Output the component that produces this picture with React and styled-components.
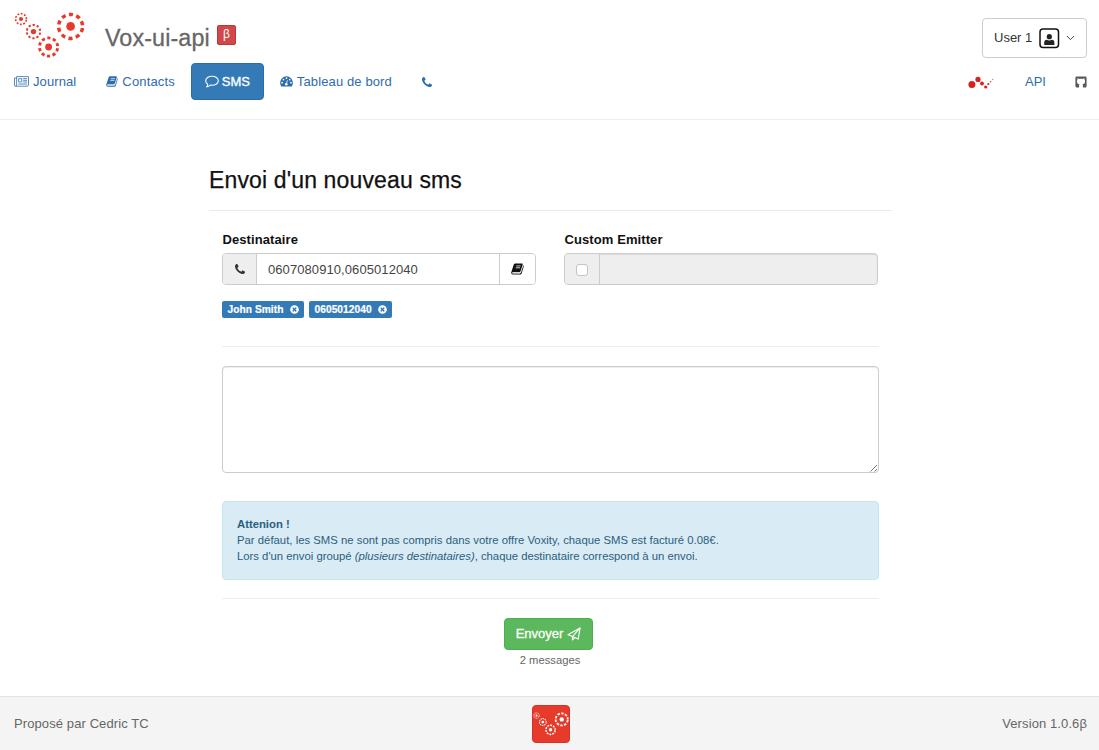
import React from "react";
import styled, { createGlobalStyle, css } from "styled-components";
import { FaTimesCircle } from "react-icons/fa";

const Global = createGlobalStyle`
  *, *::before, *::after { box-sizing: border-box; }
  body {
    margin: 0;
    background: #fff;
    color: #111;
    font-family: "Liberation Sans", Arial, Helvetica, sans-serif;
    font-size: 13px;
    line-height: 18px;
  }
`;

const Page = styled.div`
  display: flex;
  flex-direction: column;
  height: 750px;
  overflow: hidden;
`;

const Header = styled.header`
  height: 120px;
  flex: none;
  border-bottom: 1px solid #eee;
`;

const TopBar = styled.div`
  display: flex;
  justify-content: space-between;
  height: 63px;
  padding: 0 12px 0 14px;
`;

const Brand = styled.div`
  display: flex;
  align-items: flex-start;
  padding-top: 12px;
`;

const BrandName = styled.span`
  margin: 12px 6px 0 20px;
  width: 106px;
  font-size: 23.3px;
  line-height: 28px;
  letter-spacing: 0.12px;
  color: #666;
  -webkit-text-stroke: 0.3px #666;
  white-space: nowrap;
`;

const Beta = styled.span`
  width: 19px;
  height: 20px;
  margin-top: 13px;
  border: 1px solid #b5383a;
  border-radius: 2px;
  background: #d2484a;
  color: #fff;
  font-size: 12px;
  line-height: 17px;
  text-align: center;
`;

const UserButton = styled.button`
  display: flex;
  align-items: center;
  width: 105px;
  height: 40px;
  margin-top: 18px;
  padding: 0 0 0 11px;
  border: 1px solid #ccc;
  border-radius: 4px;
  background: #fff;
  color: #333;
  font: inherit;
  white-space: nowrap;
`;

const UserName = styled.span`
  width: 45px;
  text-align: left;
`;

const Nav = styled.nav`
  display: flex;
  height: 37px;
  color: #2f6cab;
`;

const NavItem = styled.a`
  display: flex;
  align-items: center;
  height: 37px;
  margin-left: ${(p) => p.$gap || 0}px;
  gap: ${(p) => p.$space ?? 4}px;
  color: #2e6dab;
  letter-spacing: ${(p) => p.$track || 0}px;
  white-space: nowrap;
  svg { flex: none; }
  ${(p) =>
    p.$active &&
    css`
      width: 73px;
      padding-left: 13px;
      gap: 3px;
      border: 1px solid #2e6da4;
      border-radius: 4px;
      background: #337ab7;
      color: #fff;
      -webkit-text-stroke: 0.35px #fff;
    `}
`;

const Spacer = styled.div`
  flex: 1;
`;

const Main = styled.main`
  flex: 1;
  width: 683px;
  margin-left: 209px;
  padding-top: 45px;
`;

const Title = styled.h1`
  margin: 0;
  height: 46px;
  border-bottom: 1px solid #eaeaea;
  font-size: 23px;
  font-weight: 400;
  line-height: 30px;
  letter-spacing: 0.14px;
  color: #111;
  -webkit-text-stroke: 0.25px #111;
`;

const Form = styled.form`
  display: flex;
  flex-direction: column;
  margin: 0 13px;
`;

const Fields = styled.div`
  display: flex;
  gap: 28px;
  height: 136px;
  padding-top: 19px;
  border-bottom: 1px solid #eee;
`;

const Field = styled.div`
  width: 314px;
`;

const Label = styled.label`
  display: block;
  height: 23px;
  padding-left: 0.5px;
  font-weight: 700;
  line-height: 19px;
  letter-spacing: 0.09px;
  white-space: nowrap;
`;

const InputGroup = styled.div`
  display: flex;
  height: 32px;
  border: 1px solid #ccc;
  border-radius: 4px;
  overflow: hidden;
  background: ${(p) => (p.$disabled ? "#eee" : "#fff")};
  box-shadow: ${(p) => (p.$disabled ? "inset 0 1px 1px rgba(0,0,0,.08)" : "none")};
`;

const Addon = styled.span`
  display: flex;
  align-items: center;
  justify-content: center;
  width: ${(p) => p.$width || 34}px;
  border-right: 1px solid #ccc;
  background: #eee;
  color: #333;
`;

const NumberInput = styled.input`
  flex: 1;
  min-width: 0;
  padding: 2px 11px 0;
  border: 0;
  outline: 0;
  background: transparent;
  color: #444;
  font: inherit;
  letter-spacing: 0.08px;
`;

const BookButton = styled.button`
  display: flex;
  align-items: center;
  justify-content: center;
  width: 36px;
  padding: 0;
  border: 0;
  border-left: 1px solid #ccc;
  background: #fff;
  color: #111;
`;

const CheckBox = styled.input`
  appearance: none;
  width: 12px;
  height: 12px;
  margin: 2px 0 0;
  border: 1px solid #c4c4c4;
  border-radius: 3px;
  background: #fff;
`;

const Tags = styled.div`
  display: flex;
  gap: 5px;
  margin-top: 16px;
`;

const Tag = styled.span`
  display: flex;
  align-items: center;
  justify-content: space-between;
  width: ${(p) => p.$width}px;
  height: 17px;
  padding: 0 5.5px;
  border-radius: 2px;
  background: #337ab7;
  color: #fff;
  font-size: 10.2px;
  font-weight: 700;
  line-height: 17px;
  letter-spacing: 0.05px;
  -webkit-text-stroke: 0.2px #fff;
  white-space: nowrap;
`;

const MessageFrame = styled.div`
  position: relative;
  height: 107px;
  margin-top: 19px;
`;

const Message = styled.textarea`
  display: block;
  width: 100%;
  height: 107px;
  border: 1px solid #ccc;
  border-radius: 4px;
  outline: 0;
  resize: none;
  box-shadow: inset 0 1px 1px rgba(0, 0, 0, 0.075);
`;

const Grip = styled.svg`
  position: absolute;
  right: 1px;
  bottom: 1px;
`;

const Notice = styled.div`
  height: 79px;
  margin-top: 28px;
  padding: 14px;
  border: 1px solid #c3e6ef;
  border-radius: 4px;
  background: #d9ebf5;
  color: #2a607d;
  font-size: 11.3px;
  line-height: 16px;
  white-space: nowrap;
`;

const NoticeLine = styled.div`
  letter-spacing: ${(p) => p.$track || 0}px;
  font-weight: ${(p) => (p.$bold ? 700 : 400)};
`;

const Actions = styled.div`
  display: flex;
  flex-direction: column;
  align-items: center;
  margin-top: 18px;
  padding: 19px 4px 0 0;
  border-top: 1px solid #eee;
`;

const SendButton = styled.button`
  display: flex;
  align-items: center;
  justify-content: center;
  gap: 4px;
  width: 89px;
  height: 32px;
  padding: 0;
  border: 1px solid #4cae4c;
  border-radius: 4px;
  background: #5cb85c;
  color: #fff;
  font: inherit;
  -webkit-text-stroke: 0.3px #fff;
`;

const Count = styled.small`
  margin: 2px 0 0 3px;
  color: #666;
  font-size: 11.2px;
  line-height: 16px;
  letter-spacing: 0.04px;
`;

const Footer = styled.footer`
  display: flex;
  align-items: center;
  justify-content: space-between;
  flex: none;
  height: 54px;
  padding: 0 12px 0 14px;
  border-top: 1px solid #e4e4e4;
  background: #f4f4f4;
  color: #666;
`;

const FooterText = styled.span`
  flex: 1;
  letter-spacing: 0.1px;
  text-align: ${(p) => p.$align || "left"};
`;

const Badge = styled.span`
  display: flex;
  align-items: center;
  width: 38px;
  height: 38px;
  border: 1px solid #d43427;
  border-radius: 4px;
  background: #e63a2b;
  overflow: hidden;
`;

const WHEELS = [
  { x: 7, y: 7, r: 5.4, w: 1.6, hub: 2.1, n: 10 },
  { x: 19.5, y: 19.6, r: 6.7, w: 2, hub: 2.7, n: 10 },
  { x: 34.6, y: 35, r: 9.1, w: 2.9, hub: 3.4, n: 10 },
  { x: 56.6, y: 14.4, r: 12, w: 3.5, hub: 4.3, n: 10 },
];

function Wheels({ width, height, color, fill = 0.55 }) {
  return (
    <svg width={width} height={height} viewBox="0 0 71 47" fill="none">
      {WHEELS.map((c) => {
        const step = (2 * Math.PI * c.r) / c.n;
        return (
          <g key={c.x}>
            <circle cx={c.x} cy={c.y} r={c.hub} fill={color} />
            <circle
              cx={c.x}
              cy={c.y}
              r={c.r}
              stroke={color}
              strokeWidth={c.w}
              strokeDasharray={`${step * fill} ${step * (1 - fill)}`}
              strokeDashoffset={step * (fill / 2 + 0.5)}
            />
          </g>
        );
      })}
    </svg>
  );
}

const BookIcon = ({ width = 13, height = 12 }) => (
  <svg width={width} height={height} viewBox="0 0 13 12">
    <path
      fill="currentColor"
      d="M4.700.4h6c.8 0 1.200.5 1 1.200L9.600 8.300c-.2.700-.6 1-1.300 1H1.900c-.5 0-.8.200-.8.500 0 .4.400.6 1 .6h6.700c.4 0 .7-.2.800-.500l2.400-7.600c.7.300.9.800.7 1.500l-2.100 6.700c-.2.700-.8 1.100-1.500 1.100H2.000C.9 11.600.1 10.700.2 9.600c0-.5.2-.8.4-1.300L2.700 1.800C3 .9 3.700.4 4.700.4z"
    />
    <path d="M5.300 2.900h4.300M4.700 4.800H9" stroke="#fff" strokeWidth=".8" fill="none" />
    <path d="M1.400 9.900h7.400c.5 0 .8-.2 1-.7L12 2.600" stroke="#fff" strokeWidth=".6" fill="none" />
  </svg>
);

const PhoneIcon = ({ size = 10 }) => (
  <svg width={size} height={size} viewBox="0 0 1408 1408" fill="currentColor">
    <path d="M1408 1112q0 27-10 70.5t-21 68.5q-21 50-122 106-94 51-186 51-27 0-53-3.5t-57.5-12.5-47-14.5-55.5-20.5-49-18q-98-35-175-83-127-79-264-216t-216-264q-48-77-83-175-3-9-18-49t-20.5-55.5-14.5-47-12.5-57.5-3.5-53q0-92 51-186 56-101 106-122 25-11 68.5-21t70.5-10q14 0 21 3 18 6 53 76 11 19 30 54t35 63.5 31 53.5q3 4 17.5 25t21.5 35.5 7 28.5q0 20-28.5 50t-62 55-62 53-28.5 46q0 9 5 22.5t8.5 20.5 14 24 11.5 19q76 137 174 235t235 174q2 1 19 11.5t24 14 20.5 8.5 22.5 5q18 0 46-28.5t53-62 55-62 50-28.5q14 0 28.5 7t35.5 21.5 25 17.5q25 15 53.5 31t63.5 35 54 30q70 35 76 53 3 7 3 21z" />
  </svg>
);

const NewspaperIcon = () => (
  <svg width="15" height="11" viewBox="0 0 15 11" fill="none" stroke="currentColor" strokeWidth=".8">
    <path d="M2.600.6h11.900v8.300c0 .8-.5 1.300-1.200 1.300H1.600c-.7 0-1.100-.5-1.100-1.200V2h2.100M2.600.6v8.300c0 .8-.4 1.300-1 1.300" />
    <path d="M4.600 2.700h3.200v3.200H4.600zM9.200 2.600h3.800M9.200 4.300h3.800M9.200 6h3.800M4.200 8h8.800" />
  </svg>
);

const CommentIcon = () => (
  <svg width="14" height="13" viewBox="0 0 14 13" fill="none" stroke="currentColor" strokeWidth="1.1" strokeLinejoin="round">
    <path d="M7 1.2c3.500 0 6.300 2 6.300 4.600S10.500 10.300 7 10.300c-.6 0-1.200-.06-1.700-.16C4.200 11.200 3 11.800 1.600 12c.7-.8 1.100-1.600 1.200-2.600C1.500 8.500.7 7.200.7 5.800.7 3.200 3.500 1.200 7 1.200z" />
  </svg>
);

const PlaneIcon = () => (
  <svg width="14" height="14" viewBox="0 0 14 14" fill="none" stroke="currentColor" strokeWidth="1.1" strokeLinejoin="round">
    <path d="M13.100.9 11.200 12.100 7.700 10.600 5.500 13V9.600L.9 7.800z" />
    <path d="M5.500 9.600 13.100.9" />
    <path d="M5.500 9.600 7.700 10.600" />
  </svg>
);

const DashboardIcon = () => (
  <svg width="13" height="11" viewBox="0 0 13 11">
    <path fill="currentColor" d="M6.500.3A6.400 6.400 0 0 0 .1 6.700c0 1.300.4 2.500 1 3.500.1.200.3.300.5.300h9.800c.2 0 .4-.1.500-.3.700-1 1-2.200 1-3.500A6.400 6.400 0 0 0 6.500.3z" />
    <g fill="#fff">
      <circle cx="2.100" cy="6.700" r=".85" />
      <circle cx="3.500" cy="3.600" r=".85" />
      <circle cx="6.500" cy="2.200" r=".85" />
      <circle cx="9.700" cy="3.600" r=".85" />
      <circle cx="10.900" cy="6.700" r=".85" />
      <circle cx="6.300" cy="8.300" r="1.300" />
    </g>
    <path d="M6.400 8 7.300 4.600" stroke="#fff" strokeWidth=".8" strokeLinecap="round" />
  </svg>
);

const AvatarIcon = () => (
  <svg width="21" height="21" viewBox="0 0 21 21">
    <rect x="1" y="1" width="18.500" height="18.500" rx="3" fill="none" stroke="#111" strokeWidth="1.500" />
    <circle cx="10.300" cy="8.700" r="2.600" fill="#222" />
    <path d="M5.200 17v-2.300c0-1.900 1-2.900 2.600-2.900.7.500 1.500.7 2.500.7s1.800-.2 2.500-.7c1.600 0 2.600 1 2.600 2.900V17z" fill="#222" />
  </svg>
);

const Chevron = styled.svg`
  margin-left: 6px;
`;

const ChevronIcon = () => (
  <Chevron width="9" height="6" viewBox="0 0 9 6" fill="none" stroke="#444" strokeWidth="1">
    <path d="M.9 1 4.500 4.600 8.100 1" />
  </Chevron>
);

const DotsIcon = () => (
  <svg width="26" height="14" viewBox="0 0 26 14" fill="#d9221c">
    <circle cx="3.900" cy="9.600" r="3.500" />
    <circle cx="10" cy="4.400" r="2.600" />
    <circle cx="14" cy="8.500" r="1.900" />
    <circle cx="17.700" cy="12" r="1.600" />
    <circle cx="20.300" cy="9" r="1.100" />
    <circle cx="22.600" cy="6.700" r=".8" opacity=".8" />
    <circle cx="24.700" cy="4.500" r=".7" opacity=".6" />
  </svg>
);

const CatIcon = () => (
  <svg width="12" height="12" viewBox="0 0 12 12" fill="#5a5a5a">
    <path fillRule="evenodd" d="M1.900.4h8.200c1 0 1.500.6 1.500 1.500v8.200c0 1-.6 1.500-1.500 1.500H7.900V9.300c0-.5-.1-.8-.4-1.100 1.500-.2 2.600-.9 2.600-2.900 0-.6-.2-1.200-.6-1.600.1-.5.100-1-.1-1.500-.7 0-1.200.3-1.700.7a6 6 0 0 0-3.400 0c-.5-.4-1-.7-1.700-.7-.2.500-.2 1-.1 1.500-.4.400-.6 1-.6 1.600 0 2 1.100 2.700 2.600 2.900-.3.300-.4.600-.4 1.100v2.300H1.900C1 11.600.4 11 .4 10.100V1.900C.4 1 1 .4 1.900.4z" />
  </svg>
);

export default function App() {
  return (
    <Page>
      <Global />
      <Header>
        <TopBar>
          <Brand>
            <Wheels width={71} height={47} color="#e63a2b" />
            <BrandName>Vox-ui-api</BrandName>
            <Beta>β</Beta>
          </Brand>
          <UserButton>
            <UserName>User 1</UserName>
            <AvatarIcon />
            <ChevronIcon />
          </UserButton>
        </TopBar>
        <Nav>
          <NavItem $gap={14} $space={4} $track={0.1}>
            <NewspaperIcon />
            Journal
          </NavItem>
          <NavItem $gap={30} $space={4} $track={0.15}>
            <BookIcon width={12} height={11} />
            Contacts
          </NavItem>
          <NavItem $gap={16} $active>
            <CommentIcon />
            SMS
          </NavItem>
          <NavItem $gap={16} $track={0.12}>
            <DashboardIcon />
            Tableau de bord
          </NavItem>
          <NavItem $gap={30}>
            <PhoneIcon />
          </NavItem>
          <Spacer />
          <NavItem>
            <DotsIcon />
          </NavItem>
          <NavItem $gap={31}>API</NavItem>
          <NavItem $gap={29}>
            <CatIcon />
          </NavItem>
          <NavItem $gap={12} />
        </Nav>
      </Header>
      <Main>
        <Title>Envoi d'un nouveau sms</Title>
        <Form>
          <Fields>
            <Field>
              <Label>Destinataire</Label>
              <InputGroup>
                <Addon>
                  <PhoneIcon />
                </Addon>
                <NumberInput defaultValue="0607080910,0605012040" />
                <BookButton type="button">
                  <BookIcon />
                </BookButton>
              </InputGroup>
              <Tags>
                <Tag $width={82}>
                  John Smith <FaTimesCircle size={9} />
                </Tag>
                <Tag $width={83}>
                  0605012040 <FaTimesCircle size={9} />
                </Tag>
              </Tags>
            </Field>
            <Field>
              <Label>Custom Emitter</Label>
              <InputGroup $disabled>
                <Addon $width={35}>
                  <CheckBox type="checkbox" />
                </Addon>
              </InputGroup>
            </Field>
          </Fields>
          <MessageFrame>
            <Message />
            <Grip width="8" height="8" viewBox="0 0 8 8" stroke="#777" strokeWidth="1">
              <path d="M.5 7.500 7 1M4.500 7.500 7 5" />
            </Grip>
          </MessageFrame>
          <Notice>
            <NoticeLine $bold>Attenion !</NoticeLine>
            <NoticeLine $track={0.02}>
              Par défaut, les SMS ne sont pas compris dans votre offre Voxity, chaque SMS est facturé 0.08€.
            </NoticeLine>
            <NoticeLine>
              Lors d'un envoi groupé <em>(plusieurs destinataires)</em>, chaque destinataire correspond à un envoi.
            </NoticeLine>
          </Notice>
          <Actions>
            <SendButton type="button">
              Envoyer <PlaneIcon />
            </SendButton>
            <Count>2 messages</Count>
          </Actions>
        </Form>
      </Main>
      <Footer>
        <FooterText>Proposé par Cedric TC</FooterText>
        <Badge>
          <Wheels width={36} height={24} color="#fff" fill={0.65} />
        </Badge>
        <FooterText $align="right">Version 1.0.6β</FooterText>
      </Footer>
    </Page>
  );
}
